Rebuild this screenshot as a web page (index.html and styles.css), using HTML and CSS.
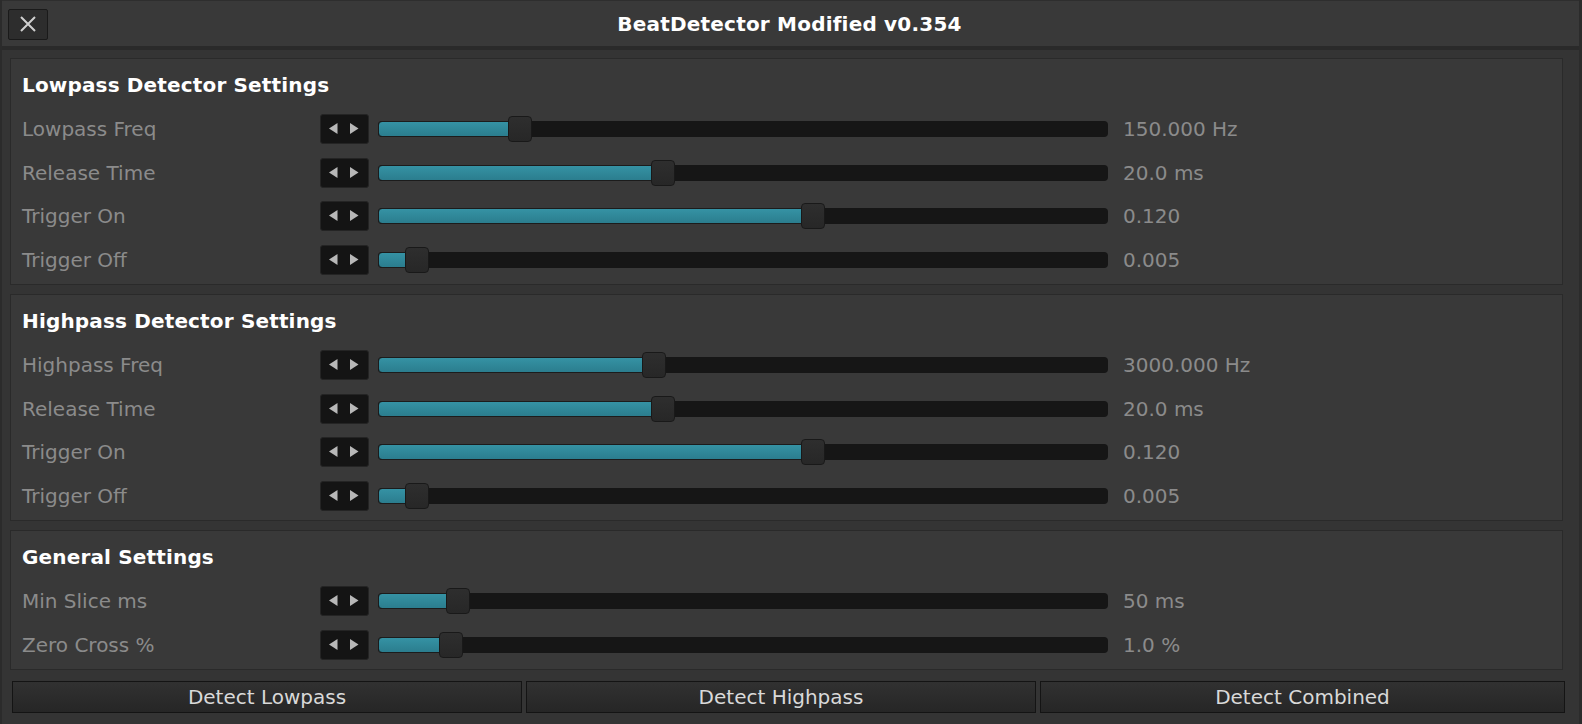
FILE: index.html
```html
<!DOCTYPE html>
<html lang="en">
<head>
  <meta charset="UTF-8">
  <meta name="viewport" content="width=device-width, initial-scale=1.0">
  <title>BeatDetector Modified v0.354</title>
  <link rel="stylesheet" href="styles.css">
</head>
<body>
  <div class="window">
    <header class="titlebar">
      <button class="close-btn" aria-label="Close">
        <svg width="16" height="16" viewBox="0 0 16 16">
          <path d="M1 1 L15 15 M15 1 L1 15" stroke="#cfcfcf" stroke-width="2" fill="none"/>
        </svg>
      </button>
      <h1 class="title">BeatDetector Modified v0.354</h1>
    </header>

    <main class="content">
      <section class="group">
        <h2>Lowpass Detector Settings</h2>
        <div class="rows">
          <div class="row">
            <span class="label">Lowpass Freq</span>
            <span class="stepper"><svg width="49" height="30" viewBox="0 0 49 30"><polygon points="17.5,9 17.5,20 9,14.5"/><polygon points="30,9 30,20 38.5,14.5"/></svg></span>
            <div class="slider"><div class="fill" style="width: 19.4%"></div><div class="knob" style="left: 19.4%"></div></div>
            <span class="value">150.000 Hz</span>
          </div>
          <div class="row">
            <span class="label">Release Time</span>
            <span class="stepper"><svg width="49" height="30" viewBox="0 0 49 30"><polygon points="17.5,9 17.5,20 9,14.5"/><polygon points="30,9 30,20 38.5,14.5"/></svg></span>
            <div class="slider"><div class="fill" style="width: 39%"></div><div class="knob" style="left: 39%"></div></div>
            <span class="value">20.0 ms</span>
          </div>
          <div class="row">
            <span class="label">Trigger On</span>
            <span class="stepper"><svg width="49" height="30" viewBox="0 0 49 30"><polygon points="17.5,9 17.5,20 9,14.5"/><polygon points="30,9 30,20 38.5,14.5"/></svg></span>
            <div class="slider"><div class="fill" style="width: 59.6%"></div><div class="knob" style="left: 59.6%"></div></div>
            <span class="value">0.120</span>
          </div>
          <div class="row">
            <span class="label">Trigger Off</span>
            <span class="stepper"><svg width="49" height="30" viewBox="0 0 49 30"><polygon points="17.5,9 17.5,20 9,14.5"/><polygon points="30,9 30,20 38.5,14.5"/></svg></span>
            <div class="slider"><div class="fill" style="width: 5.3%"></div><div class="knob" style="left: 5.3%"></div></div>
            <span class="value">0.005</span>
          </div>
        </div>
      </section>

      <section class="group">
        <h2>Highpass Detector Settings</h2>
        <div class="rows">
          <div class="row">
            <span class="label">Highpass Freq</span>
            <span class="stepper"><svg width="49" height="30" viewBox="0 0 49 30"><polygon points="17.5,9 17.5,20 9,14.5"/><polygon points="30,9 30,20 38.5,14.5"/></svg></span>
            <div class="slider"><div class="fill" style="width: 37.8%"></div><div class="knob" style="left: 37.8%"></div></div>
            <span class="value">3000.000 Hz</span>
          </div>
          <div class="row">
            <span class="label">Release Time</span>
            <span class="stepper"><svg width="49" height="30" viewBox="0 0 49 30"><polygon points="17.5,9 17.5,20 9,14.5"/><polygon points="30,9 30,20 38.5,14.5"/></svg></span>
            <div class="slider"><div class="fill" style="width: 39%"></div><div class="knob" style="left: 39%"></div></div>
            <span class="value">20.0 ms</span>
          </div>
          <div class="row">
            <span class="label">Trigger On</span>
            <span class="stepper"><svg width="49" height="30" viewBox="0 0 49 30"><polygon points="17.5,9 17.5,20 9,14.5"/><polygon points="30,9 30,20 38.5,14.5"/></svg></span>
            <div class="slider"><div class="fill" style="width: 59.6%"></div><div class="knob" style="left: 59.6%"></div></div>
            <span class="value">0.120</span>
          </div>
          <div class="row">
            <span class="label">Trigger Off</span>
            <span class="stepper"><svg width="49" height="30" viewBox="0 0 49 30"><polygon points="17.5,9 17.5,20 9,14.5"/><polygon points="30,9 30,20 38.5,14.5"/></svg></span>
            <div class="slider"><div class="fill" style="width: 5.3%"></div><div class="knob" style="left: 5.3%"></div></div>
            <span class="value">0.005</span>
          </div>
        </div>
      </section>

      <section class="group">
        <h2>General Settings</h2>
        <div class="rows">
          <div class="row">
            <span class="label">Min Slice ms</span>
            <span class="stepper"><svg width="49" height="30" viewBox="0 0 49 30"><polygon points="17.5,9 17.5,20 9,14.5"/><polygon points="30,9 30,20 38.5,14.5"/></svg></span>
            <div class="slider"><div class="fill" style="width: 11%"></div><div class="knob" style="left: 11%"></div></div>
            <span class="value">50 ms</span>
          </div>
          <div class="row">
            <span class="label">Zero Cross %</span>
            <span class="stepper"><svg width="49" height="30" viewBox="0 0 49 30"><polygon points="17.5,9 17.5,20 9,14.5"/><polygon points="30,9 30,20 38.5,14.5"/></svg></span>
            <div class="slider"><div class="fill" style="width: 10%"></div><div class="knob" style="left: 10%"></div></div>
            <span class="value">1.0 %</span>
          </div>
        </div>
      </section>

      <div class="actions">
        <button class="action-btn">Detect Lowpass</button>
        <button class="action-btn">Detect Highpass</button>
        <button class="action-btn wide">Detect Combined</button>
      </div>
    </main>
  </div>
</body>
</html>
```

FILE: styles.css
```css
* {
  margin: 0;
  padding: 0;
  box-sizing: border-box;
}

body {
  font-family: 'DejaVu Sans', 'Liberation Sans', sans-serif;
  font-size: 20px;
  background-color: #2b2b2b;
  color: #fff;
  overflow: hidden;
}

.window {
  width: 1582px;
  height: 724px;
  background: #343434;
  border-left: 2px solid #2b2b2b;
  border-right: 3px solid #2b2b2b;
  display: flex;
  flex-direction: column;
  overflow: hidden;
}

/* title bar */
.titlebar {
  height: 50px;
  flex-shrink: 0;
  display: grid;
  grid-template-columns: 1fr auto 1fr;
  align-items: center;
  background: #393939;
  border-top: 1px solid #2e2e2e;
  border-bottom: 4px solid #2a2a2a;
}

.close-btn {
  width: 40px;
  height: 31px;
  margin-left: 6px;
  margin-top: 1px;
  background: #2d2d2d;
  border: 1px solid #1a1a1a;
  border-radius: 2px;
  display: flex;
  align-items: center;
  justify-content: center;
  justify-self: start;
}

.title {
  font-size: 20px;
  font-weight: bold;
  letter-spacing: 0.2px;
  color: #fff;
  margin-left: -2px;
}

/* main area */
.content {
  padding: 8px 16px 0 8px;
  display: flex;
  flex-direction: column;
  gap: 9px;
}

.group {
  background: #393939;
  border: 1px solid #2a2a2a;
  padding: 14px 12px 9px 11px;
}

.group h2 {
  font-size: 20px;
  font-weight: bold;
  letter-spacing: 0.16px;
  line-height: 24px;
  color: #fff;
  margin-bottom: 17px;
}

.rows {
  display: flex;
  flex-direction: column;
  gap: 13.7px;
}

.row {
  display: flex;
  align-items: center;
  height: 30px;
}

.label {
  width: 298px;
  color: #8b8b8b;
  white-space: nowrap;
}

.stepper {
  width: 49px;
  height: 30px;
  background: #141414;
  border: 1px solid #242424;
  border-radius: 3px;
  display: flex;
}

.stepper svg {
  margin: -1px;
  fill: #b8b8b8;
}

.slider {
  position: relative;
  width: 730px;
  height: 16px;
  margin-left: 9px;
  background: #161616;
  border-radius: 4px;
}

.fill {
  height: 100%;
  background: linear-gradient(#3592a4, #2b7d8e);
  border: 1px solid #1c1c1c;
  border-radius: 4px 0 0 4px;
}

.knob {
  position: absolute;
  top: 50%;
  width: 24px;
  height: 26px;
  transform: translate(-50%, -50%);
  background: linear-gradient(#2e2e2e, #272727);
  border: 1px solid #191919;
  border-radius: 4px;
}

.value {
  margin-left: 15px;
  color: #8b8b8b;
  white-space: nowrap;
}

/* bottom buttons */
.actions {
  display: flex;
  gap: 4px;
  margin: 2px -2px 0 2px;
}

.action-btn {
  flex: 0 0 510px;
  height: 32px;
  font-family: inherit;
  font-size: 20px;
  color: #d9d9d9;
  background: linear-gradient(#313131, #262626);
  border: 1px solid #141414;
}

.action-btn.wide {
  flex: 1;
}
```
